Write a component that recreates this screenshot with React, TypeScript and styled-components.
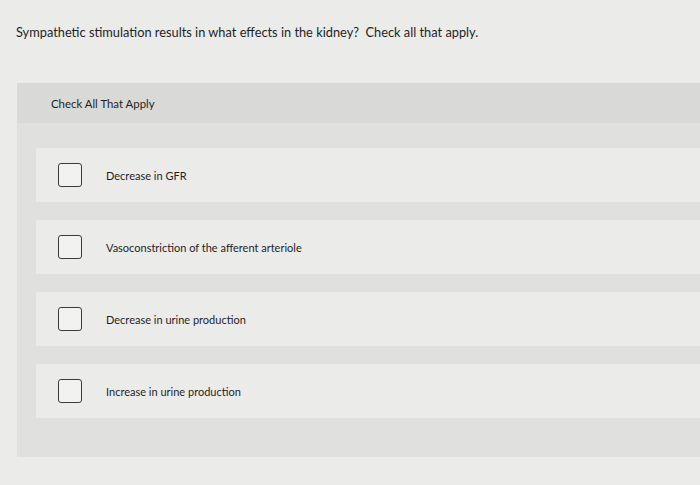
import styled, { createGlobalStyle } from 'styled-components'

const options = [
  'Decrease in GFR',
  'Vasoconstriction of the afferent arteriole',
  'Decrease in urine production',
  'Increase in urine production',
]

const GlobalStyle = createGlobalStyle`
  body {
    margin: 0;
    background: #ebebea;
    font-family: Lato, 'Open Sans', sans-serif;
    color: #1f1f1f;
  }
`

const Page = styled.div`
  width: 700px;
  height: 485px;
  overflow: hidden;
`

const Question = styled.div`
  padding: 24px 0 0 16px;
  height: 83px;
  box-sizing: border-box;
  font-size: 12.8px;
  line-height: 16px;
`

const Panel = styled.section`
  margin-left: 17px;
  background: #e0e0df;
  display: flex;
  flex-direction: column;
`

const PanelHeader = styled.div`
  height: 40px;
  display: flex;
  align-items: center;
  padding-left: 34px;
  background: #d9d9d8;
  font-size: 11.4px;
`

const OptionList = styled.div`
  display: flex;
  flex-direction: column;
  gap: 18px;
  padding: 25px 0 39px 19px;
`

const OptionRow = styled.label`
  height: 54px;
  display: flex;
  align-items: center;
  gap: 24px;
  padding-left: 22px;
  background: #ebebea;
  font-size: 11px;
`

const Box = styled.span`
  width: 22px;
  height: 22px;
  border: 1.6px solid #3a3a3a;
  border-radius: 3px;
  background: #f2f2f1;
`

export default function App() {
  return (
    <Page>
      <GlobalStyle />
      <Question>
        Sympathetic stimulation results in what effects in the kidney?&nbsp; Check all that apply.
      </Question>
      <Panel>
        <PanelHeader>Check All That Apply</PanelHeader>
        <OptionList>
          {options.map((text) => (
            <OptionRow key={text}>
              <Box />
              <span>{text}</span>
            </OptionRow>
          ))}
        </OptionList>
      </Panel>
    </Page>
  )
}
